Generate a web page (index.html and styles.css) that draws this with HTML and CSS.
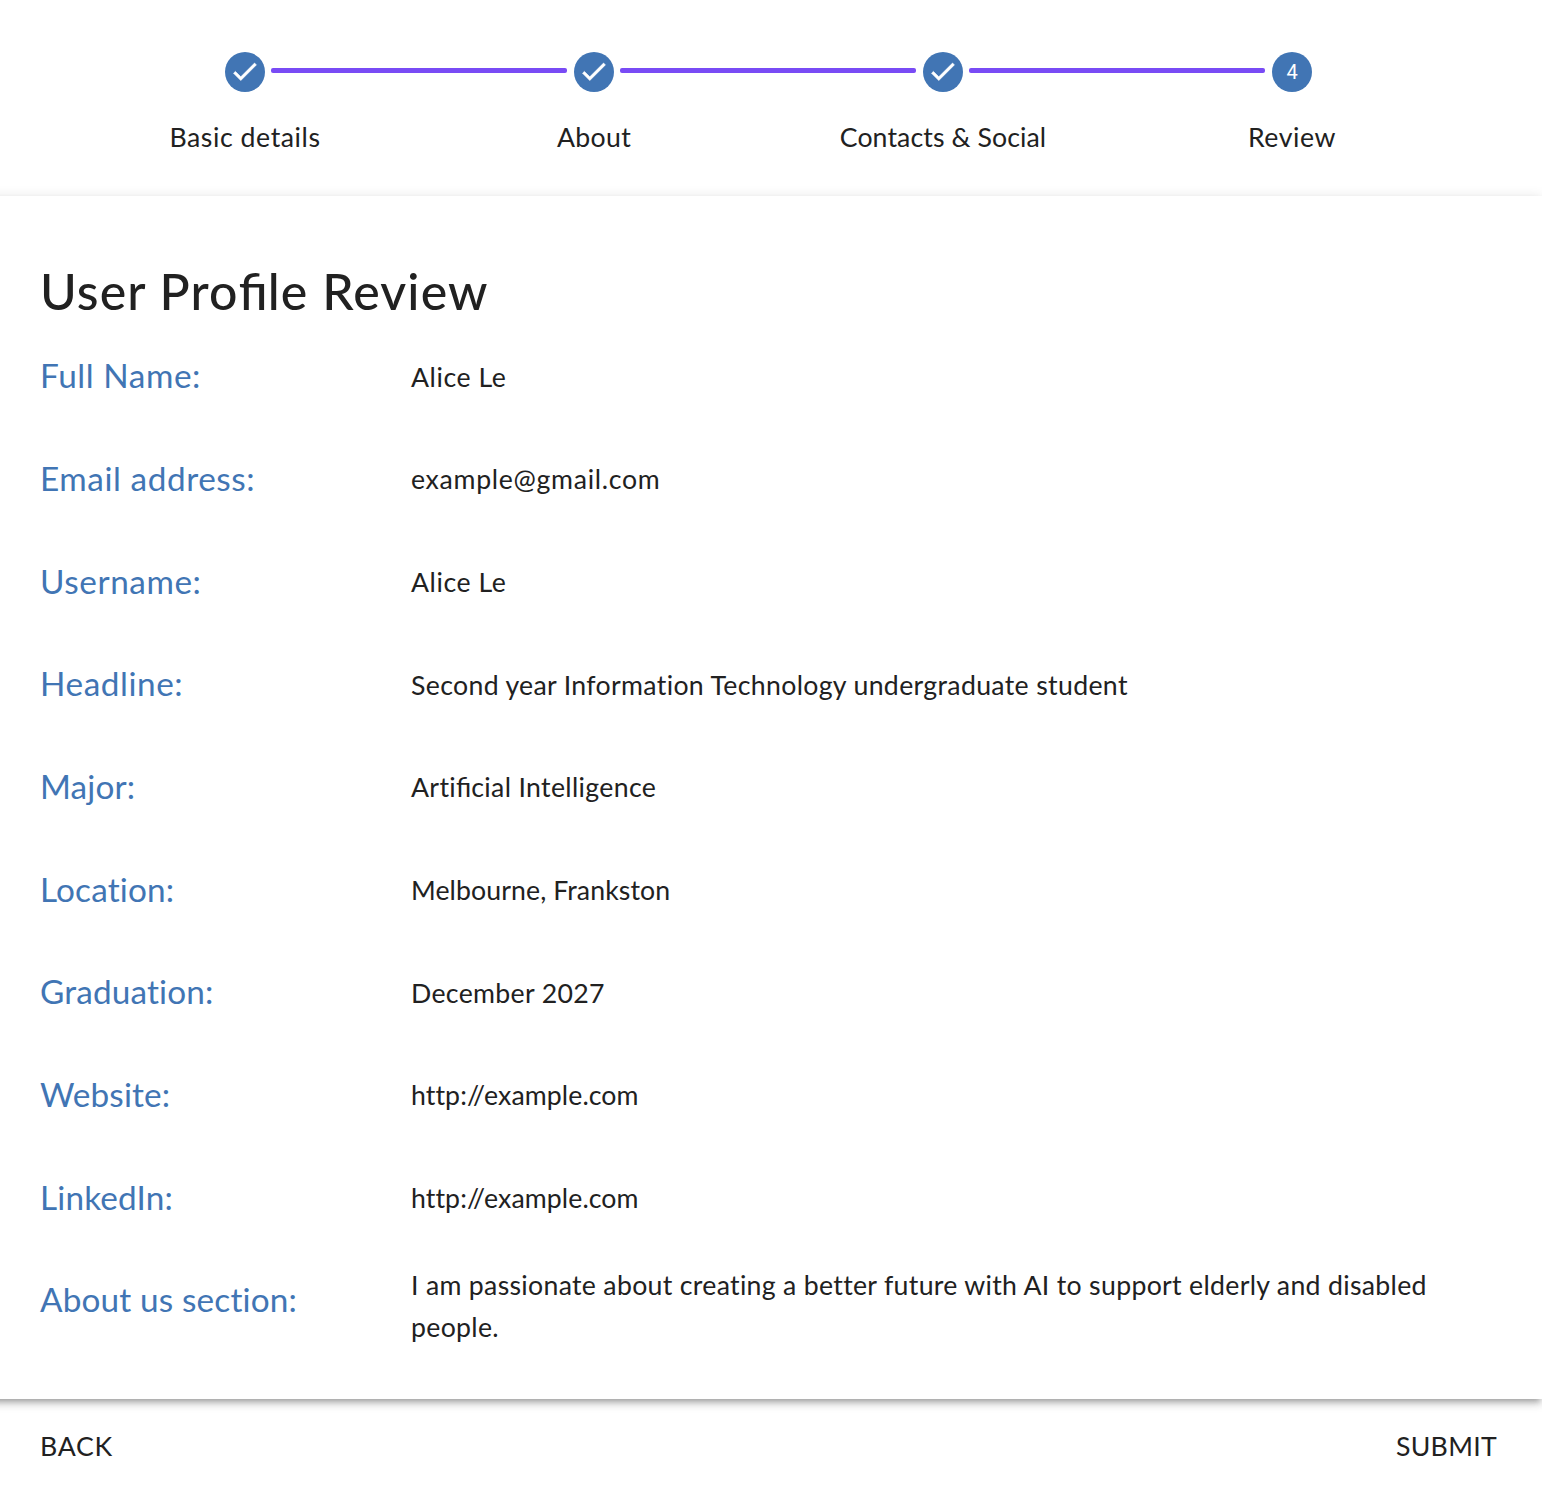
FILE: index.html
```
<!DOCTYPE html>
<html lang="en">
<head>
<meta charset="utf-8">
<title>User Profile Review</title>
<link rel="stylesheet" href="styles.css">
</head>
<body>
<header class="stepper">
  <div class="step">
    <div class="track"><i class="line before hidden"></i><svg class="badge" viewBox="0 0 40 40"><circle cx="20" cy="20" r="20"/><path class="tick" transform="translate(4.1 3.8) scale(1.3)" d="M9 16.17 4.83 12l-1.42 1.41L9 19 21 7l-1.41-1.41z"/></svg><i class="line after"></i></div>
    <span class="name wide">Basic details</span>
  </div>
  <div class="step">
    <div class="track"><i class="line before"></i><svg class="badge" viewBox="0 0 40 40"><circle cx="20" cy="20" r="20"/><path class="tick" transform="translate(4.1 3.8) scale(1.3)" d="M9 16.17 4.83 12l-1.42 1.41L9 19 21 7l-1.41-1.41z"/></svg><i class="line after"></i></div>
    <span class="name">About</span>
  </div>
  <div class="step">
    <div class="track"><i class="line before"></i><svg class="badge" viewBox="0 0 40 40"><circle cx="20" cy="20" r="20"/><path class="tick" transform="translate(4.1 3.8) scale(1.3)" d="M9 16.17 4.83 12l-1.42 1.41L9 19 21 7l-1.41-1.41z"/></svg><i class="line after"></i></div>
    <span class="name tight">Contacts &amp; Social</span>
  </div>
  <div class="step">
    <div class="track"><i class="line before"></i><svg class="badge" viewBox="0 0 40 40"><circle cx="20" cy="20" r="20"/><text class="number" x="20" y="27" text-anchor="middle">4</text></svg><i class="line after hidden"></i></div>
    <span class="name wide">Review</span>
  </div>
</header>
<main class="review">
  <h1 class="title">User Pro<span class="lig">fi</span>le Review</h1>
  <dl class="fields">
    <dt class="wide">Full Name:</dt><dd class="wide">Alice Le</dd>
    <dt class="wide">Email address:</dt><dd class="wider">example@gmail.com</dd>
    <dt class="wide">Username:</dt><dd class="wide">Alice Le</dd>
    <dt class="wide">Headline:</dt><dd>Second year Information Technology undergraduate student</dd>
    <dt>Major:</dt><dd>Arti<span class="lig">fi</span>cial Intelligence</dd>
    <dt>Location:</dt><dd class="tight">Melbourne, Frankston</dd>
    <dt>Graduation:</dt><dd>December 2027</dd>
    <dt>Website:</dt><dd class="tight">http://example.com</dd>
    <dt>LinkedIn:</dt><dd class="tight">http://example.com</dd>
    <dt>About us section:</dt><dd class="long">I am passionate about creating a better future with AI to support elderly and disabled people.</dd>
  </dl>
</main>
<footer class="actions">
  <button class="action">BACK</button>
  <button class="action submit">SUBMIT</button>
</footer>
</body>
</html>
```
FILE: styles.css
```
* { box-sizing: border-box; }

body {
  margin: 0;
  height: 1485px;
  display: flex;
  flex-direction: column;
  overflow: hidden;
  background: #fff;
  color: #212121;
  font: 400 26.67px/42px Lato, "Open Sans", sans-serif;
  letter-spacing: 0.34px;
}

.stepper {
  display: grid;
  grid-template-columns: repeat(4, 349px);
  height: 195.5px;
  padding: 52px 0 0 70.5px;
}
.step { display: flex; flex-direction: column; gap: 23.5px; }
.track { display: flex; align-items: center; height: 40px; }
.badge { flex: none; width: 40px; height: 40px; fill: #4175b4; }
.tick { fill: #fff; stroke: #fff; stroke-width: 0.5; }
.number { fill: #fff; font: 20px Roboto, sans-serif; letter-spacing: 0; }
.line { flex: 1; height: 5px; margin-bottom: 3px; background: #794bf5; }
.before { margin-left: -1px; margin-right: 7px; border-radius: 0 2px 2px 0; }
.after { margin-left: 6px; border-radius: 2px 0 0 2px; }
.hidden { visibility: hidden; }
.name { text-align: center; line-height: 42px; }

.review {
  position: relative;
  height: 1203.5px;
  margin-left: -20px;
  padding: 61px 40px 0 60px;
  background: #fff;
  box-shadow:
    0 5px 5px -3px rgba(0, 0, 0, 0.2),
    0 5px 7px rgba(0, 0, 0, 0.14),
    0 2px 13px rgba(0, 0, 0, 0.12);
}
.title { margin: 0; font-size: 50px; font-weight: 500; line-height: 68px; letter-spacing: 1.15px; }
.lig { letter-spacing: 0; }

.fields {
  display: grid;
  grid-template-columns: 371px 1fr;
  grid-auto-rows: 102.67px;
  align-items: center;
  margin: 0;
}
.fields dt { padding-bottom: 1px; font-size: 33.33px; color: #4175b4; letter-spacing: 0.15px; }
.fields dd { margin: 0; padding-top: 2px; }
.fields .long { padding-top: 12px; letter-spacing: 0.31px; }
.tight, .fields .tight { letter-spacing: 0.1px; }
.wide, .fields .wide { letter-spacing: 0.57px; }
.fields .wider { letter-spacing: 0.7px; }

.actions { display: flex; justify-content: space-between; padding: 26px 45px 0 40px; }
.action {
  padding: 0;
  border: 0;
  background: none;
  color: inherit;
  font: inherit;
  letter-spacing: 0.7px;
}
.submit { letter-spacing: 0.3px; }
```
